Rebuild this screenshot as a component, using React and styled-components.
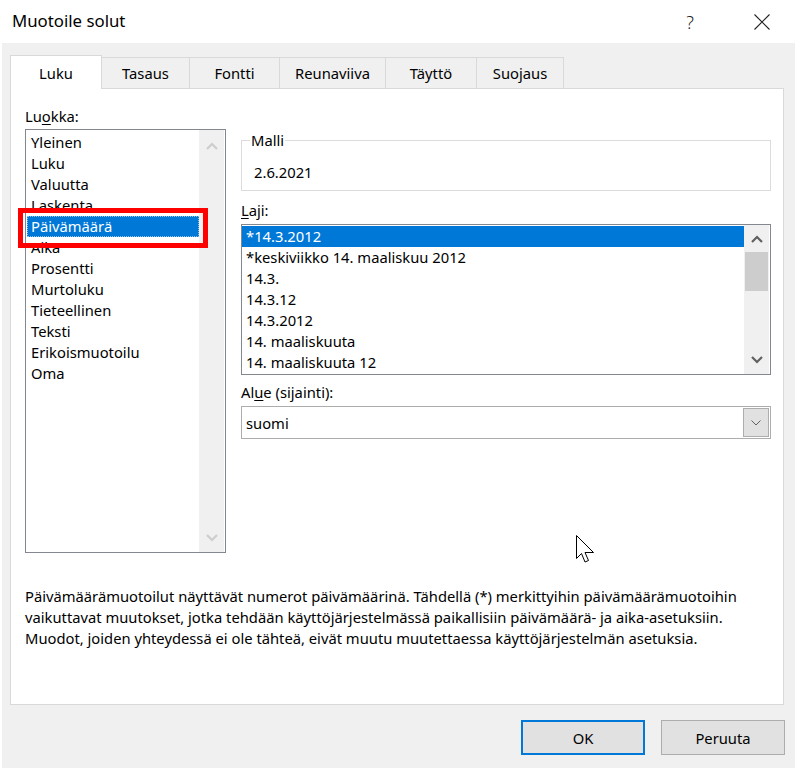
import React from "react";
import styled, { createGlobalStyle } from "styled-components";

const GlobalStyle = createGlobalStyle`
  html, body { margin: 0; padding: 0; background: #ffffff; }
  body { font-family: "Noto Sans", "Segoe UI", sans-serif; color: #000; }
  * { box-sizing: border-box; }
`;

const FONT = 14.75;

const Window = styled.div`
  position: relative;
  width: 795px;
  height: 768px;
  display: flex;
  flex-direction: column;
  background: #ffffff;
  overflow: hidden;
`;

const TitleBar = styled.div`
  height: 43px;
  display: flex;
  align-items: center;
  padding-left: 12px;
  padding-right: 10px;
`;

const Title = styled.div`
  flex: 1;
  font-size: 16.8px;
  margin-top: -2px;
`;

const CaptionButton = styled.div`
  width: 46px;
  height: 30px;
  display: flex;
  align-items: center;
  justify-content: center;
  margin-left: ${(p) => p.$gap || 0}px;
  font-size: 18px;
  font-weight: 300;
  color: #222;
`;

const Body = styled.div`
  flex: 1;
  margin-left: 2px;
  background: #f0f0f0;
  padding: 12px 11px 0 8px;
  display: flex;
  flex-direction: column;
`;

const TabStrip = styled.div`
  display: flex;
  align-items: flex-end;
  height: 33px;
  position: relative;
  z-index: 1;
`;

const Tab = styled.div`
  width: ${(p) => p.$w}px;
  height: ${(p) => (p.$active ? 34 : 31)}px;
  margin-bottom: ${(p) => (p.$active ? -1 : 0)}px;
  margin-left: ${(p) => (p.$first ? 0 : -1)}px;
  border: 1px solid #d9d9d9;
  border-bottom: none;
  background: ${(p) => (p.$active ? "#ffffff" : "#f0f0f0")};
  display: flex;
  justify-content: center;
  padding-top: ${(p) => (p.$active ? 7 : 5)}px;
  font-size: ${FONT}px;
  line-height: 20px;
  position: relative;
  z-index: ${(p) => (p.$active ? 2 : 1)};
`;

const Panel = styled.div`
  width: 774px;
  height: 617px;
  background: #ffffff;
  border: 1px solid #d9d9d9;
  padding: 17px 0 0 14px;
  display: flex;
  flex-direction: column;
`;

const Columns = styled.div`
  display: grid;
  grid-template-columns: 201px 530px;
  column-gap: 15px;
  align-items: start;
`;

const Column = styled.div`
  display: flex;
  flex-direction: column;
`;

const Label = styled.div`
  font-size: ${FONT}px;
  line-height: 20px;
  margin-top: ${(p) => p.$mt || 0}px;
  margin-bottom: ${(p) => p.$mb || 0}px;
`;

const Key = styled.span`
  text-decoration: underline;
  text-underline-offset: 2px;
`;

const ListBox = styled.div`
  height: ${(p) => p.$h}px;
  border: 1px solid #828790;
  display: flex;
  padding-right: 1px;
  background: #ffffff;
`;

const Items = styled.div`
  flex: 1;
  min-width: 0;
  padding-top: ${(p) => p.$pt || 0}px;
  padding-left: ${(p) => p.$pl || 0}px;
  display: flex;
  flex-direction: column;
`;

const Item = styled.div`
  position: relative;
  height: 21px;
  line-height: 21px;
  font-size: ${FONT}px;
  padding-left: 4px;
  white-space: nowrap;
  background: ${(p) => (p.$selected ? "#0078d7" : "transparent")};
  color: ${(p) => (p.$selected ? "#ffffff" : "#000000")};
  outline: ${(p) => (p.$focus ? "1px dotted rgba(255,255,255,0.55)" : "none")};
  outline-offset: -1px;
`;

const RedMark = styled.div`
  position: absolute;
  left: -9px;
  top: -8px;
  width: 190px;
  height: 40px;
  border: 5px solid #ff0000;
  pointer-events: none;
  z-index: 5;
`;

const ScrollBar = styled.div`
  width: 25px;
  flex-shrink: 0;
  background: #f0f0f0;
  display: flex;
  flex-direction: column;
`;

const ScrollButton = styled.div`
  height: ${(p) => p.$h || 28}px;
  display: flex;
  align-items: center;
  justify-content: center;
`;

const ScrollTrack = styled.div`
  flex: 1;
  display: flex;
  flex-direction: column;
`;

const Thumb = styled.div`
  height: 39px;
  margin: 0 1px;
  background: #cdcdcd;
`;

const Fieldset = styled.fieldset`
  margin: 24px 0 0 0;
  border: 1px solid #dcdcdc;
  padding: 12px 12px 8px 12px;
  min-width: 0;
`;

const Legend = styled.legend`
  font-size: ${FONT}px;
  line-height: 20px;
  padding: 0 1px;
  margin-left: -4px;
`;

const Sample = styled.div`
  font-size: ${FONT}px;
  line-height: 20px;
`;

const Select = styled.div`
  height: 33px;
  border: 1px solid #adadad;
  display: flex;
  align-items: center;
  padding: 1px 1px 1px 4px;
  font-size: ${FONT}px;
`;

const SelectText = styled.div`
  flex: 1;
`;

const DropButton = styled.div`
  width: 26px;
  height: 100%;
  background: #e1e1e1;
  border: 1px solid #adadad;
  display: flex;
  align-items: center;
  justify-content: center;
`;

const Description = styled.p`
  margin: 33px 0 0 0;
  font-size: ${FONT}px;
  line-height: 21px;
  white-space: nowrap;
`;

const Footer = styled.div`
  display: flex;
  justify-content: flex-end;
  gap: 16px;
  padding-top: 15px;
  margin-right: -1px;
`;

const Button = styled.div`
  width: 124px;
  height: 35px;
  background: #e1e1e1;
  border: ${(p) => (p.$default ? "2px solid #0078d7" : "1px solid #adadad")};
  display: flex;
  align-items: center;
  justify-content: center;
  font-size: ${FONT}px;
`;

const Cursor = styled.svg`
  position: absolute;
  left: 576px;
  top: 535px;
`;

const Chevron = ({ up, color }) => (
  <svg width="12" height="8" viewBox="0 0 12 8">
    <polyline
      points={up ? "1,7 6,2 11,7" : "1,1 6,6 11,1"}
      fill="none"
      stroke={color}
      strokeWidth="2.2"
    />
  </svg>
);

const categories = [
  "Yleinen",
  "Luku",
  "Valuutta",
  "Laskenta",
  "Päivämäärä",
  "Aika",
  "Prosentti",
  "Murtoluku",
  "Tieteellinen",
  "Teksti",
  "Erikoismuotoilu",
  "Oma",
];

const types = [
  "*14.3.2012",
  "*keskiviikko 14. maaliskuu 2012",
  "14.3.",
  "14.3.12",
  "14.3.2012",
  "14. maaliskuuta",
  "14. maaliskuuta 12",
];

const tabs = [
  { name: "Luku", w: 92 },
  { name: "Tasaus", w: 89 },
  { name: "Fontti", w: 91 },
  { name: "Reunaviiva", w: 107 },
  { name: "Täyttö", w: 92 },
  { name: "Suojaus", w: 88 },
];

export default function App() {
  return (
    <>
      <GlobalStyle />
      <Window>
        <TitleBar>
          <Title>Muotoile solut</Title>
          <CaptionButton>?</CaptionButton>
          <CaptionButton $gap={26}>
            <svg width="16" height="16" viewBox="0 0 16 16">
              <path d="M0.5 0.5 L15.5 15.5 M15.5 0.5 L0.5 15.5" stroke="#222" strokeWidth="1.1" />
            </svg>
          </CaptionButton>
        </TitleBar>
        <Body>
          <TabStrip>
            {tabs.map((t, i) => (
              <Tab key={t.name} $w={t.w} $first={i === 0} $active={i === 0}>
                {t.name}
              </Tab>
            ))}
          </TabStrip>
          <Panel>
            <Columns>
              <Column>
                <Label $mb={3}>
                  Lu<Key>o</Key>kka:
                </Label>
                <ListBox $h={424}>
                  <Items $pt={2} $pl={1}>
                    {categories.map((c) => (
                      <Item key={c} $selected={c === "Päivämäärä"} $focus={c === "Päivämäärä"}>
                        {c}
                        {c === "Päivämäärä" && <RedMark />}
                      </Item>
                    ))}
                  </Items>
                  <ScrollBar>
                    <ScrollButton $h={31}>
                      <Chevron up color="#cdcdcd" />
                    </ScrollButton>
                    <ScrollTrack />
                    <ScrollButton $h={29}>
                      <Chevron color="#cdcdcd" />
                    </ScrollButton>
                  </ScrollBar>
                </ListBox>
              </Column>
              <Column>
                <Fieldset>
                  <Legend>Malli</Legend>
                  <Sample>2.6.2021</Sample>
                </Fieldset>
                <Label $mt={9} $mb={4}>
                  <Key>L</Key>aji:
                </Label>
                <ListBox $h={151}>
                  <Items $pt={1}>
                    {types.map((t, i) => (
                      <Item key={t} $selected={i === 0}>
                        {t}
                      </Item>
                    ))}
                  </Items>
                  <ScrollBar>
                    <ScrollButton $h={27}>
                      <Chevron up color="#606060" />
                    </ScrollButton>
                    <ScrollTrack>
                      <Thumb />
                    </ScrollTrack>
                    <ScrollButton $h={28}>
                      <Chevron color="#606060" />
                    </ScrollButton>
                  </ScrollBar>
                </ListBox>
                <Label $mt={7} $mb={4}>
                  Al<Key>u</Key>e (sijainti):
                </Label>
                <Select>
                  <SelectText>suomi</SelectText>
                  <DropButton>
                    <svg width="10" height="6" viewBox="0 0 10 6">
                      <polyline points="0.5,0.5 5,5 9.5,0.5" fill="none" stroke="#606060" strokeWidth="1" />
                    </svg>
                  </DropButton>
                </Select>
              </Column>
            </Columns>
            <Description>
              Päivämäärämuotoilut näyttävät numerot päivämäärinä. Tähdellä (*) merkittyihin päivämäärämuotoihin
              <br />
              vaikuttavat muutokset, jotka tehdään käyttöjärjestelmässä paikallisiin päivämäärä- ja aika-asetuksiin.
              <br />
              Muodot, joiden yhteydessä ei ole tähteä, eivät muutu muutettaessa käyttöjärjestelmän asetuksia.
            </Description>
          </Panel>
          <Footer>
            <Button $default>OK</Button>
            <Button>Peruuta</Button>
          </Footer>
        </Body>
        <Cursor width="19" height="29" viewBox="0 0 19 29">
          <path
            d="M0.5 0.5 L0.5 23.5 L5.5 18.5 L9 27 L12.5 25.5 L9 17.5 L17.5 17.5 Z"
            fill="#ffffff"
            stroke="#000000"
            strokeWidth="1"
            strokeLinejoin="miter"
          />
        </Cursor>
      </Window>
    </>
  );
}
